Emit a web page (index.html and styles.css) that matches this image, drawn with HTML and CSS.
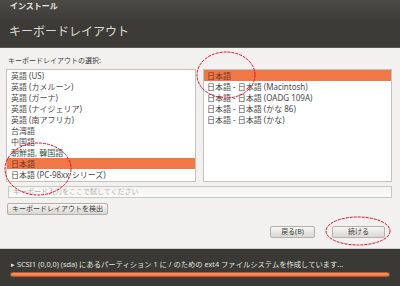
FILE: index.html
```html
<!DOCTYPE html>
<html lang="ja">
<head>
    <meta charset="UTF-8">
    <title>インストール</title>
    <link rel="stylesheet" href="styles.css">
</head>
<body>
    <div class="header">
        <div class="app-name">インストール</div>
        <h1 class="title">キーボードレイアウト</h1>
    </div>

    <div class="content">
        <div class="label">キーボードレイアウトの選択:</div>
        <div class="lists">
            <div class="list">
                <div class="row">英語 (US)</div>
                <div class="row">英語 (カメルーン)</div>
                <div class="row">英語 (ガーナ)</div>
                <div class="row">英語 (ナイジェリア)</div>
                <div class="row">英語 (南アフリカ)</div>
                <div class="row">台湾語</div>
                <div class="row">中国語</div>
                <div class="row">朝鮮語, 韓国語</div>
                <div class="row selected">日本語</div>
                <div class="row">日本語 (PC-98xx シリーズ)</div>
            </div>
            <div class="list">
                <div class="row selected">日本語</div>
                <div class="row">日本語 - 日本語 (Macintosh)</div>
                <div class="row">日本語 - 日本語 (OADG 109A)</div>
                <div class="row">日本語 - 日本語 (かな 86)</div>
                <div class="row">日本語 - 日本語 (かな)</div>
            </div>
        </div>
        <div class="entry">キーボード入力をここで試してください</div>
        <div class="detect-row">
            <button class="btn">キーボードレイアウトを検出</button>
        </div>
        <div class="nav">
            <button class="btn nav-btn back">戻る(B)</button>
            <button class="btn nav-btn next">続ける</button>
        </div>
    </div>

    <div class="footer">
        <div class="status">▸ SCSI1 (0,0,0) (sda) にあるパーティション 1 に / のための ext4 ファイルシステムを作成しています...</div>
        <div class="progress"><div class="progress-fill" style="width: 100%"></div></div>
    </div>

    <svg class="marks" width="400" height="286" viewBox="0 0 400 286">
        <ellipse cx="226" cy="75" rx="29" ry="23" />
        <ellipse cx="38" cy="169" rx="33" ry="26" />
        <ellipse cx="358" cy="231" rx="32" ry="14" />
    </svg>
</body>
</html>
```

FILE: styles.css
```css
body {
    margin: 0;
    width: 400px;
    height: 286px;
    overflow: hidden;
    position: relative;
    font-family: "Noto Sans", "Noto Sans CJK JP", sans-serif;
    background-color: #f2f1f0;
    color: #3c3c3c;
}
.header {
    height: 48px;
    box-sizing: border-box;
    background: linear-gradient(#4c4b46, #3c3b37 45%);
    border-bottom: 1px solid #5a5954;
    padding: 0 10px;
}
.app-name {
    font-size: 8px;
    font-weight: bold;
    color: #e8e6e0;
    line-height: 11px;
}
.title {
    margin: 14px 0 0 -1px;
    font-size: 12px;
    font-weight: normal;
    line-height: 14px;
    color: #dfdbd2;
}
.content {
    height: 200px;
    box-sizing: border-box;
    padding: 0 8px 0 6px;
    display: flex;
    flex-direction: column;
}
.label {
    margin-top: 8px;
    margin-left: 2px;
    font-size: 7px;
    line-height: 10px;
}
.lists {
    margin-top: 3px;
    display: grid;
    grid-template-columns: 190px 189px;
    gap: 7px;
}
.list {
    height: 113px;
    box-sizing: border-box;
    background-color: white;
    border: 1px solid #c4c2be;
    overflow: hidden;
}
.row {
    height: 11px;
    line-height: 11px;
    font-size: 8px;
    padding-left: 4px;
    white-space: nowrap;
    color: #4a4a4a;
}
.list + .list .row {
    padding-left: 3px;
}
.row.selected {
    background-color: #f07746;
    color: #6a3b26;
}
.entry {
    margin: 4px 0 0 2px;
    height: 12px;
    box-sizing: border-box;
    border: 1px solid #c9c7c3;
    background: linear-gradient(#f3f3f2, #fbfbfb);
    font-size: 7px;
    line-height: 10px;
    padding-left: 4px;
    color: #b4b2ae;
}
.detect-row {
    display: flex;
    margin: 5px 0 0 1px;
}
.btn {
    font-family: inherit;
    font-size: 7px;
    color: #3c3c3c;
    height: 12px;
    line-height: 10px;
    padding: 0 4px;
    border: 1px solid #b3b0aa;
    border-radius: 2px;
    background: linear-gradient(#f7f6f5, #d9d7d3);
}
.nav {
    margin-top: 11px;
    display: flex;
    justify-content: flex-end;
    gap: 17px;
    padding-right: 7px;
}
.back {
    width: 45px;
}
.next {
    width: 53px;
}
.footer {
    height: 38px;
    box-sizing: border-box;
    background-color: #3a3935;
    border-top: 1px solid #cfcdc9;
    padding: 10px 10px 0 10px;
}
.status {
    font-size: 7.3px;
    line-height: 10px;
    color: #e6e4df;
    white-space: nowrap;
    padding-left: 1px;
}
.progress {
    margin-top: 3px;
    height: 5px;
    box-sizing: border-box;
    border: 1px solid #b65530;
    border-radius: 3px;
    background-color: #5a5954;
    overflow: hidden;
}
.progress-fill {
    height: 100%;
    background: linear-gradient(#f79a6c, #ee7440);
}
.marks {
    position: absolute;
    left: 0;
    top: 0;
    pointer-events: none;
}
.marks ellipse {
    fill: none;
    stroke: #e0102a;
    stroke-width: 1;
    stroke-dasharray: 3 1;
}
```
